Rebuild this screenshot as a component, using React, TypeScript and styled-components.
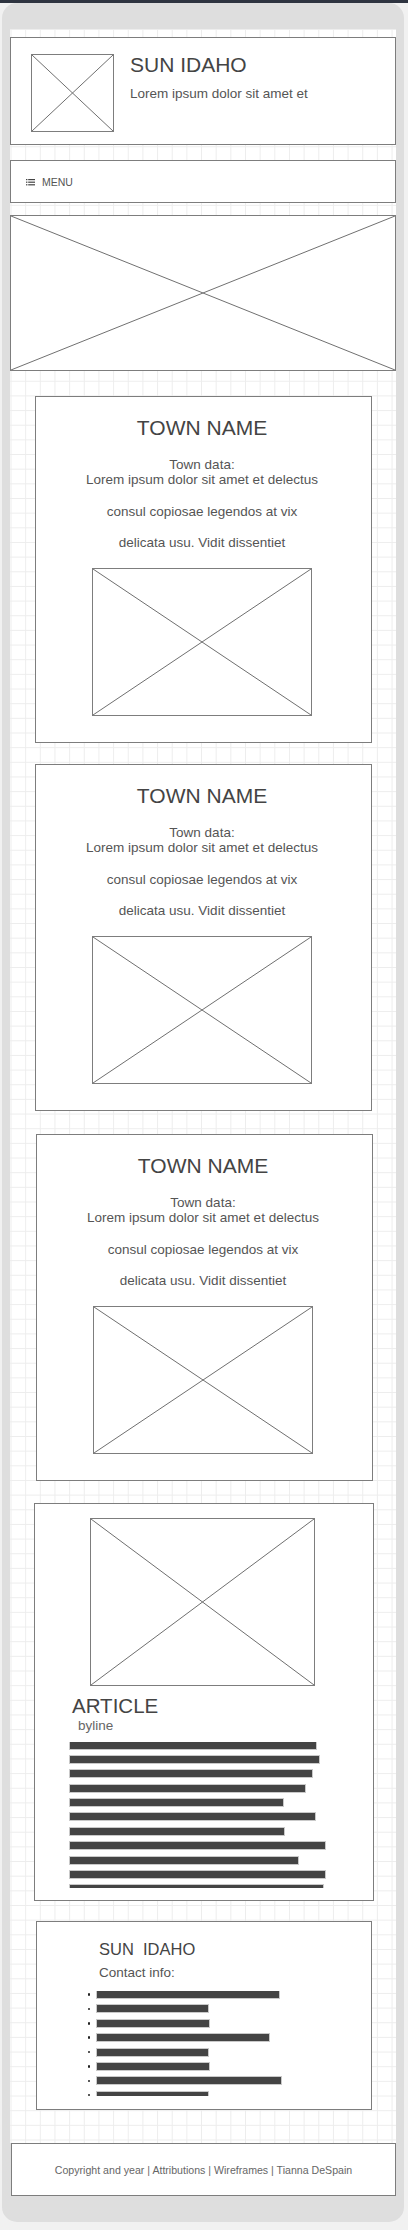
import styled, { createGlobalStyle } from "styled-components";

const GlobalStyle = createGlobalStyle`
  html, body {
    margin: 0;
    padding: 0;
    background: #f1f1f1;
    font-family: "Liberation Sans", Arial, sans-serif;
  }
  * { box-sizing: border-box; }
`;

const TopBar = styled.div`
  height: 3px;
  background: #2e3440;
`;

const Frame = styled.div`
  width: 402px;
  margin-left: 2px;
  padding: 26px 8px 26px 8px;
  background: #dedede;
  border-radius: 15px;
`;

const Canvas = styled.main`
  display: flex;
  flex-direction: column;
  padding: 8px 0 33px;
  background-color: #fff;
  background-image:
    linear-gradient(to right, #ededed 1px, transparent 1px),
    linear-gradient(to bottom, #ededed 1px, transparent 1px);
  background-size: 14.67px 14.67px;
  background-position: 0.5px 0;
`;

const Box = styled.section<{ $gap?: number }>`
  margin-top: ${(p) => p.$gap ?? 0}px;
  background: #fff;
  border: 1px solid #7d7d7d;
`;

/* header */

const Header = styled(Box)`
  display: flex;
  gap: 16px;
  height: 108px;
  padding: 16px 0 0 20px;
`;

const Brand = styled.div`
  display: flex;
  flex-direction: column;
  gap: 12px;
`;

const SiteTitle = styled.h1`
  margin: 0;
  font-size: 21px;
  line-height: 1;
  font-weight: 400;
  color: #444;
`;

const Tagline = styled.p`
  margin: 0;
  font-size: 13.5px;
  line-height: 1;
  color: #555;
`;

/* menu */

const MenuBar = styled(Box)`
  display: flex;
  align-items: center;
  gap: 7px;
  height: 43px;
  padding-left: 15px;
  font-size: 10.5px;
  color: #555;
`;

/* placeholder picture */

const Placeholder = styled.div<{ $w?: number; $h: number }>`
  width: ${(p) => (p.$w ? `${p.$w}px` : "100%")};
  height: ${(p) => p.$h}px;
  flex-shrink: 0;
  background: #fff;
  border: 1px solid #7d7d7d;

  svg {
    display: block;
    width: 100%;
    height: 100%;
  }
`;

const Hero = styled.div`
  margin-top: 12px;
`;

const Picture = ({ w, h }: { w?: number; h: number }) => (
  <Placeholder $w={w} $h={h}>
    <svg viewBox="0 0 100 100" preserveAspectRatio="none">
      <line x1="0" y1="0" x2="100" y2="100" stroke="#6f6f6f" strokeWidth="1" vectorEffect="non-scaling-stroke" />
      <line x1="100" y1="0" x2="0" y2="100" stroke="#6f6f6f" strokeWidth="1" vectorEffect="non-scaling-stroke" />
    </svg>
  </Placeholder>
);

/* cards */

const Card = styled(Box)<{ $inset?: number; $w?: number }>`
  display: flex;
  flex-direction: column;
  margin-left: ${(p) => p.$inset ?? 25}px;
  width: ${(p) => p.$w ?? 337}px;
`;

const TownCard = styled(Card)`
  align-items: center;
  height: 347px;
  padding: 20px 3px 0 0;
`;

const TownName = styled.h2`
  margin: 0;
  font-size: 21px;
  line-height: 1;
  font-weight: 400;
  color: #444;
`;

const TownData = styled.div`
  margin: 18.5px 0 17px;
  text-align: center;
  font-size: 13.5px;
  line-height: 15.8px;
  color: #555;

  p { margin: 0; }
  p + p { margin-top: 15.8px; }
`;

const ArticleCard = styled(Card)`
  height: 398px;
  padding: 14px 0 0 35px;
`;

const ArticlePicture = styled.div`
  margin-left: 20px;
`;

const ArticleTitle = styled.h2`
  margin: 10px 0 0 2px;
  font-size: 20.5px;
  line-height: 1;
  font-weight: 400;
  color: #444;
`;

const Byline = styled.span`
  margin: 2.5px 0 0 8px;
  font-size: 13.5px;
  line-height: 1;
  color: #666;
`;

const Lines = styled.div<{ $h: number; $top: number; $shift?: number }>`
  display: flex;
  flex-direction: column;
  gap: 7.4px;
  height: ${(p) => p.$h}px;
  margin: ${(p) => p.$top}px 0 0 ${(p) => -1 - (p.$shift ?? 0)}px;
  padding: 0 1px;
  overflow: hidden;
`;

const Bar = styled.div<{ $w: number }>`
  flex-shrink: 0;
  width: ${(p) => p.$w}px;
  height: 7px;
  background: #444;
  box-shadow: 0 0 0 1px #c9c9c9;
`;

const ContactCard = styled(Card)`
  height: 189px;
  padding: 19px 0 0 62px;
`;

const ContactTitle = styled.h3`
  margin: 0;
  font-size: 16.5px;
  line-height: 1;
  font-weight: 400;
  white-space: pre;
  color: #444;
`;

const ContactLabel = styled.p`
  margin: 8px 0 0;
  font-size: 13.5px;
  line-height: 1;
  color: #555;
`;

const ContactItem = styled.div`
  display: flex;
  align-items: center;
  flex-shrink: 0;
  gap: 7px;

  &::before {
    content: "";
    width: 2.5px;
    height: 2.5px;
    border-radius: 50%;
    background: #222;
  }
`;

const Footer = styled.footer`
  display: flex;
  align-items: center;
  justify-content: center;
  height: 53px;
  margin-left: 1px;
  background: #fff;
  border: 1px solid #7d7d7d;
  font-size: 10.6px;
  color: #666;
`;

const MenuIcon = () => (
  <svg width="9" height="8" viewBox="0 0 9 8">
    <g fill="#444">
      <rect x="0" y="1" width="1.4" height="1.2" />
      <rect x="2.2" y="1" width="6.8" height="1.2" />
      <rect x="0" y="3.6" width="1.4" height="1.2" />
      <rect x="2.2" y="3.6" width="6.8" height="1.2" />
      <rect x="0" y="6.2" width="1.4" height="1.2" />
      <rect x="2.2" y="6.2" width="6.8" height="1.2" />
    </g>
  </svg>
);

const towns = [
  { gap: 25, inset: 25 },
  { gap: 21, inset: 25 },
  { gap: 23, inset: 26 },
];

const articleBars = [246, 249, 242, 235, 213, 245, 214, 255, 228, 255, 253];
const contactBars = [182, 111, 112, 172, 111, 112, 184, 111];

const App = () => {
  return (
    <>
      <GlobalStyle />
      <TopBar />
      <Frame>
        <Canvas>
          <Header>
            <Picture w={83} h={78} />
            <Brand>
              <SiteTitle>SUN IDAHO</SiteTitle>
              <Tagline>Lorem ipsum dolor sit amet et</Tagline>
            </Brand>
          </Header>

          <MenuBar $gap={15}>
            <MenuIcon />
            MENU
          </MenuBar>

          <Hero>
            <Picture h={156} />
          </Hero>

          {towns.map((t, i) => (
            <TownCard key={i} $gap={t.gap} $inset={t.inset}>
              <TownName>TOWN NAME</TownName>
              <TownData>
                <p>
                  Town data:
                  <br />
                  Lorem ipsum dolor sit amet et delectus
                </p>
                <p>consul copiosae legendos at vix</p>
                <p>delicata usu. Vidit dissentiet</p>
              </TownData>
              <Picture w={220} h={148} />
            </TownCard>
          ))}

          <ArticleCard $gap={22} $inset={24} $w={340}>
            <ArticlePicture>
              <Picture w={225} h={168} />
            </ArticlePicture>
            <ArticleTitle>ARTICLE</ArticleTitle>
            <Byline>byline</Byline>
            <Lines $h={146} $top={9}>
              {articleBars.map((w, i) => (
                <Bar key={i} $w={w} />
              ))}
            </Lines>
          </ArticleCard>

          <ContactCard $gap={20} $inset={26} $w={336}>
            <ContactTitle>SUN  IDAHO</ContactTitle>
            <ContactLabel>Contact info:</ContactLabel>
            <Lines $h={105} $top={12} $shift={11.5}>
              {contactBars.map((w, i) => (
                <ContactItem key={i}>
                  <Bar $w={w} />
                </ContactItem>
              ))}
            </Lines>
          </ContactCard>
        </Canvas>
        <Footer>Copyright and year | Attributions | Wireframes | Tianna DeSpain</Footer>
      </Frame>
    </>
  );
};

export default App;
